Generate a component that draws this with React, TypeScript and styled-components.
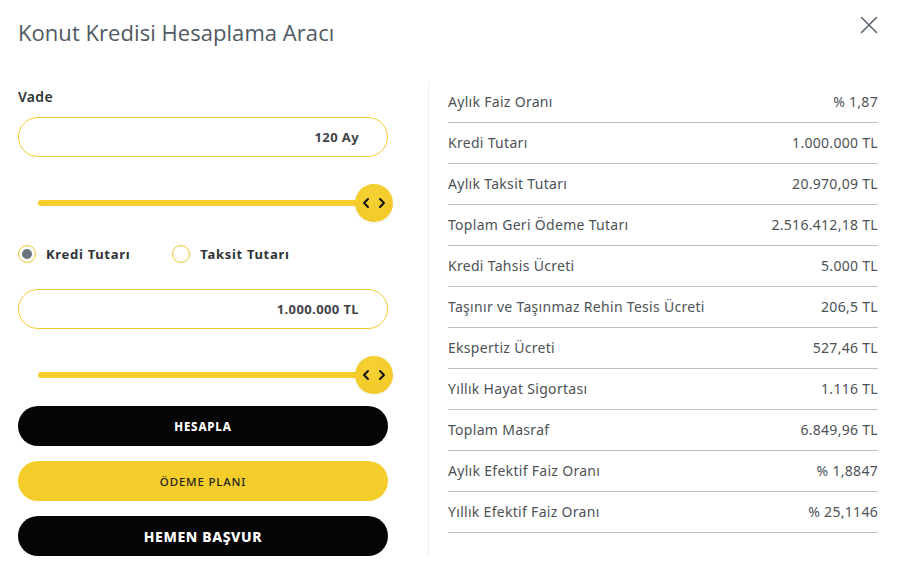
import React, { useState } from 'react';
import styled, { createGlobalStyle } from 'styled-components';

const GlobalStyle = createGlobalStyle`
  html, body {
    margin: 0;
    padding: 0;
    background: #ffffff;
  }
  body {
    font-family: 'Noto Sans', 'Liberation Sans', sans-serif;
    color: #3d4247;
  }
`;

const summaryRows = [
  { label: 'Aylık Faiz Oranı', value: '% 1,87' },
  { label: 'Kredi Tutarı', value: '1.000.000 TL' },
  { label: 'Aylık Taksit Tutarı', value: '20.970,09 TL' },
  { label: 'Toplam Geri Ödeme Tutarı', value: '2.516.412,18 TL' },
  { label: 'Kredi Tahsis Ücreti', value: '5.000 TL' },
  { label: 'Taşınır ve Taşınmaz Rehin Tesis Ücreti', value: '206,5 TL' },
  { label: 'Ekspertiz Ücreti', value: '527,46 TL' },
  { label: 'Yıllık Hayat Sigortası', value: '1.116 TL' },
  { label: 'Toplam Masraf', value: '6.849,96 TL' },
  { label: 'Aylık Efektif Faiz Oranı', value: '% 1,8847' },
  { label: 'Yıllık Efektif Faiz Oranı', value: '% 25,1146' },
];

const Slider = () => (
  <SliderWrap>
    <Track />
    <Thumb>
      <svg width="26" height="12" viewBox="0 0 26 12" fill="none">
        <path d="M7 2 L3 6 L7 10" stroke="#111" strokeWidth="2" strokeLinecap="round" strokeLinejoin="round" />
        <path d="M19 2 L23 6 L19 10" stroke="#111" strokeWidth="2" strokeLinecap="round" strokeLinejoin="round" />
      </svg>
    </Thumb>
  </SliderWrap>
);

const App = () => {
  const [mode, setMode] = useState<'kredi' | 'taksit'>('kredi');

  return (
    <>
      <GlobalStyle />
      <Modal>
        <Header>
          <Title>Konut Kredisi Hesaplama Aracı</Title>
          <CloseButton aria-label="Kapat">
            <svg width="18" height="18" viewBox="0 0 18 18">
              <path d="M1.5 1.5 L16.5 16.5 M16.5 1.5 L1.5 16.5" stroke="#5d6670" strokeWidth="1.6" strokeLinecap="round" />
            </svg>
          </CloseButton>
        </Header>
        <Body>
          <FormColumn>
            <FieldLabel>Vade</FieldLabel>
            <ValueBox>120 Ay</ValueBox>
            <Slider />
            <RadioRow>
              <RadioOption onClick={() => setMode('kredi')}>
                <RadioCircle checked={mode === 'kredi'} />
                Kredi Tutarı
              </RadioOption>
              <RadioOption onClick={() => setMode('taksit')}>
                <RadioCircle checked={mode === 'taksit'} />
                Taksit Tutarı
              </RadioOption>
            </RadioRow>
            <ValueBox>1.000.000 TL</ValueBox>
            <Slider />
            <Buttons>
              <ActionButton variant="dark">HESAPLA</ActionButton>
              <ActionButton variant="yellow">ÖDEME PLANI</ActionButton>
              <ActionButton variant="dark" large>HEMEN BAŞVUR</ActionButton>
            </Buttons>
          </FormColumn>
          <ResultColumn>
            {summaryRows.map((row) => (
              <ResultRow key={row.label}>
                <span>{row.label}</span>
                <span>{row.value}</span>
              </ResultRow>
            ))}
          </ResultColumn>
        </Body>
      </Modal>
    </>
  );
};

export default App;

const Modal = styled.div`
  width: 900px;
  height: 570px;
  box-sizing: border-box;
  padding: 0 22px 0 18px;
  background: #fff;
`;

const Header = styled.div`
  display: flex;
  justify-content: space-between;
  align-items: flex-start;
  height: 82px;
`;

const Title = styled.h1`
  margin: 17px 0 0;
  font-family: 'Open Sans', 'Noto Sans', sans-serif;
  font-size: 22px;
  font-weight: 400;
  color: #505962;
  letter-spacing: 0.05px;
`;

const CloseButton = styled.button`
  margin-top: 16px;
  padding: 0;
  border: 0;
  background: none;
  width: 18px;
  height: 18px;
  cursor: pointer;
`;

const Body = styled.div`
  display: flex;
  align-items: flex-start;
`;

const FormColumn = styled.div`
  width: 370px;
  display: flex;
  flex-direction: column;
  padding-top: 5px;
  margin-right: 40px;
`;

const FieldLabel = styled.div`
  font-size: 14px;
  font-weight: 600;
  color: #2f3438;
  line-height: 20px;
  margin-bottom: 10px;
  letter-spacing: 0.3px;
`;

const ValueBox = styled.div`
  height: 40px;
  box-sizing: border-box;
  border: 1px solid #f2cc2b;
  border-radius: 20px;
  display: flex;
  align-items: center;
  justify-content: flex-end;
  padding-right: 28px;
  font-size: 13px;
  font-weight: 700;
  letter-spacing: 0.4px;
  color: #3f454b;
`;

const SliderWrap = styled.div`
  width: 375px;
  height: 38px;
  display: flex;
  align-items: center;
  padding-left: 20px;
  box-sizing: border-box;
  margin: 27px 0 0;
`;

const Track = styled.div`
  flex: 1;
  height: 6px;
  border-radius: 3px;
  background: #f4ce2c;
`;

const Thumb = styled.div`
  width: 38px;
  height: 38px;
  margin-left: -19px;
  border-radius: 50%;
  background: radial-gradient(circle at 50% 35%, #f6d133 0%, #f3cb2a 70%, #eec526 100%);
  box-shadow: 0 1px 2px rgba(0, 0, 0, 0.08);
  display: flex;
  align-items: center;
  justify-content: center;
  flex-shrink: 0;
`;

const RadioRow = styled.div`
  display: flex;
  gap: 42px;
  margin: 23px 0 26px;
  height: 18px;
`;

const RadioOption = styled.label`
  display: flex;
  align-items: center;
  gap: 10px;
  font-size: 13px;
  font-weight: 700;
  letter-spacing: 0.7px;
  color: #2f3438;
  cursor: pointer;
`;

const RadioCircle = styled.span<{ checked: boolean }>`
  width: 18px;
  height: 18px;
  box-sizing: border-box;
  border: 1px solid #ecc62a;
  border-radius: 50%;
  display: flex;
  align-items: center;
  justify-content: center;
  &::after {
    content: '';
    width: 10px;
    height: 10px;
    border-radius: 50%;
    background: ${(p) => (p.checked ? '#6b737c' : 'transparent')};
  }
`;

const Buttons = styled.div`
  display: flex;
  flex-direction: column;
  gap: 15px;
  margin-top: 12px;
`;

const ActionButton = styled.button<{ variant: 'dark' | 'yellow'; large?: boolean }>`
  height: 40px;
  border: 0;
  border-radius: 20px;
  font-family: 'Noto Sans', 'Liberation Sans', sans-serif;
  font-size: ${(p) => (p.large ? '14px' : '11.5px')};
  font-weight: ${(p) => (p.variant === 'dark' ? 800 : 500)};
  letter-spacing: ${(p) => (p.large ? '0.6px' : '0.8px')};
  background: ${(p) => (p.variant === 'dark' ? '#050505' : '#f4cd2a')};
  color: ${(p) => (p.variant === 'dark' ? '#ffffff' : '#1f1f1f')};
  cursor: pointer;
`;

const ResultColumn = styled.div`
  flex: 1;
  border-left: 1px solid #ededed;
  padding-left: 19px;
  height: 473px;
`;

const ResultRow = styled.div`
  height: 41px;
  box-sizing: border-box;
  border-bottom: 1px solid #b9c0c6;
  display: flex;
  justify-content: space-between;
  align-items: center;
  font-size: 14px;
  letter-spacing: 0.3px;
  color: #4d5257;
  padding-bottom: 1px;
`;
